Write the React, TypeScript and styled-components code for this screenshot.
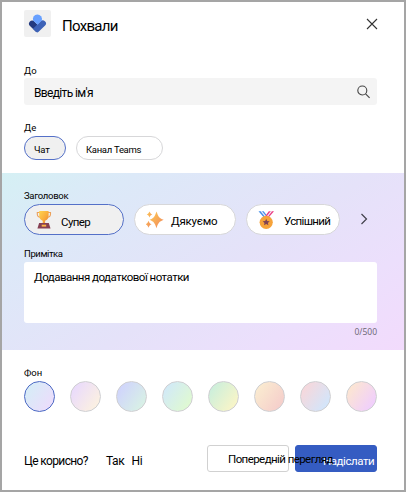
import React from "react";
import styled, { createGlobalStyle } from "styled-components";

const Global = createGlobalStyle`
  * { box-sizing: border-box; }
  body { margin: 0; background: #fff; }
`;

const Dialog = styled.main`
  width: 406px;
  height: 492px;
  border: 2px solid #a5a5a5;
  background: #fff;
  display: flex;
  flex-direction: column;
  overflow: hidden;
  color: #000;
  font-family: Roboto, "Noto Sans", sans-serif;
`;

const Text = styled.span<{ $size: number; $gap?: number; $drop?: number }>`
  display: block;
  white-space: nowrap;
  font-size: ${(p) => p.$size}px;
  line-height: 16px;
  letter-spacing: ${(p) => p.$gap ?? 0}px;
  padding-top: ${(p) => p.$drop ?? 0}px;
`;

const Header = styled.header`
  display: flex;
  align-items: center;
  height: 43px;
  padding: 8px 25px 8px 22px;
`;

const Logo = styled.div`
  width: 27px;
  height: 27px;
  border-radius: 2px;
  background: #f0f0f0;
  margin-right: 11px;
`;

const IconButton = styled.button`
  border: 0;
  padding: 0;
  background: none;
  display: flex;
  margin-left: auto;
`;

const Field = styled.section<{ $height: number; $top: number }>`
  height: ${(p) => p.$height}px;
  padding: ${(p) => p.$top}px 27px 0 22px;
`;

const Label = styled(Text)`
  height: 16px;
`;

const SearchBox = styled.div`
  height: 27px;
  display: flex;
  align-items: center;
  justify-content: space-between;
  border-radius: 3px;
  padding: 2px 6px 0 10px;
  background: #f4f4f4;
  svg { margin-top: -2px; }
`;

const Chips = styled.div`
  display: flex;
  align-items: center;
  gap: 10px;
`;

const Chip = styled.button<{ $width: number; $selected?: boolean; $large?: boolean; $iconGap?: number }>`
  flex: none;
  width: ${(p) => p.$width}px;
  height: ${(p) => (p.$large ? 31 : 24)}px;
  display: flex;
  align-items: center;
  padding: ${(p) => (p.$large ? "0 0 0 11px" : "3px 0 0 9px")};
  border: 1px solid ${(p) => (p.$selected ? "#5470c8" : "#d7d7d9")};
  border-radius: 16px;
  background: ${(p) => (p.$selected ? "#f0f0f0" : "#fff")};
  color: inherit;
  font-family: inherit;
  svg { flex: none; margin-right: ${(p) => p.$iconGap ?? 0}px; }
`;

const Next = styled.button`
  border: 0;
  padding: 0;
  background: none;
  margin: -2px 0 0 9px;
  display: flex;
`;

const Band = styled.section`
  height: 177px;
  padding: 15px 27px 0 22px;
  background: linear-gradient(147deg, #d5f0f4 0%, #dce9f8 20%, #e5e2f9 55%, #ecdffc 78%, #f2dbfc 100%);
`;

const NoteLabel = styled(Label)`
  margin-top: 10px;
  height: 17px;
`;

const Note = styled.div`
  height: 61px;
  border-radius: 3px;
  background: #fff;
  padding: 7px 10px;
`;

const Counter = styled(Text)`
  color: #696674;
  text-align: right;
  font-family: "Open Sans", "Noto Sans", sans-serif;
`;

const Swatches = styled.div`
  display: flex;
  justify-content: space-between;
  margin: -0.5px -0.5px 0 -0.5px;
`;

const Swatch = styled.div<{ $from: string; $to: string; $selected?: boolean }>`
  width: 31px;
  height: 31px;
  border-radius: 50%;
  border: 1px solid ${(p) => (p.$selected ? "#4c69c4" : "#cfcfd2")};
  background: linear-gradient(125deg, ${(p) => p.$from} 15%, ${(p) => p.$to} 85%);
`;

const Footer = styled.footer`
  display: flex;
  padding: 32px 27px 0 22px;
`;

const Feedback = styled.div`
  display: flex;
  width: 183px;
  padding-top: 8px;
`;

const Answers = styled.div`
  display: flex;
  gap: 7px;
  margin-left: 18px;
`;

const Action = styled.button<{ $primary?: boolean }>`
  flex: none;
  width: 82px;
  height: 27px;
  display: flex;
  align-items: center;
  border-radius: 3px;
  border: 1px solid ${(p) => (p.$primary ? "#355cc2" : "#d1d1d1")};
  background: ${(p) => (p.$primary ? "#355cc2" : "#fff")};
  color: ${(p) => (p.$primary ? "#fff" : "#000")};
  padding: ${(p) => (p.$primary ? "4px 0 0 27px" : "1px 0 0 20px")};
  margin-left: ${(p) => (p.$primary ? 6 : 0)}px;
  font-family: inherit;
`;

/* The preview caption runs over the neighbouring button. */
const OverlayText = styled(Text)`
  position: relative;
  z-index: 1;
`;

const swatches = [
  ["#d7ecf7", "#ebddfb"],
  ["#eadbfb", "#fbf0e2"],
  ["#d0d5fb", "#d8f0e6"],
  ["#d2eaf6", "#dff9d2"],
  ["#cdefdb", "#f8f5c8"],
  ["#faead0", "#f5cfcb"],
  ["#f6d8dc", "#d3e5fa"],
  ["#fce5d3", "#f0cffc"],
];

const Trophy = () => (
  <svg width="18" height="20" viewBox="0 0 18 20">
    <defs>
      <linearGradient id="cup" x1="0" y1="0" x2="1" y2="1">
        <stop offset="0" stopColor="#ffd34f" />
        <stop offset=".55" stopColor="#f9ac3c" />
        <stop offset="1" stopColor="#e77c35" />
      </linearGradient>
    </defs>
    <path d="M4 2.500H1.300v1.400c0 1.900 1.300 3.200 3.200 3.300M12 2.500h2.500v1.400c0 1.900-1.300 3.200-3.200 3.300" fill="none" stroke="#eca05a" strokeWidth="1.100" />
    <path d="M3.200 1h9.400v4.600c0 2.900-1.400 4.700-3.500 5.200v3.500H6.700v-3.500C4.600 10.300 3.200 8.500 3.200 5.600z" fill="url(#cup)" />
    <path d="M3.100 13h9.700l1.700 5.600H1.400z" fill="#874052" />
    <path d="M5.700 14.700h4.500v1.900H5.700z" fill="#ffb549" />
  </svg>
);

const Sparkles = () => (
  <svg width="20" height="20" viewBox="0 0 20 20">
    <defs>
      <linearGradient id="spark" x1="0" y1="0" x2="1" y2="1">
        <stop offset="0" stopColor="#ffcf52" />
        <stop offset="1" stopColor="#ef835e" />
      </linearGradient>
    </defs>
    <g fill="url(#spark)">
      <path d="M10.500 1.400c1.900 5.500 2.400 6.400 7.200 8.400-4.800 2-5.300 2.900-7.200 8.500-1.900-5.600-2.400-6.500-7-8.500 4.600-2 5.100-2.900 7-8.400z" />
      <path d="M3.500 1.600c.8 1.800 1.100 2.200 2.800 2.900-1.700.7-2 1.100-2.800 2.900C2.700 5.600 2.400 5.200.7 4.500c1.700-.7 2-1.100 2.800-2.900zM2.500 10.700c.8 2.200 1.200 2.700 3.100 3.500-1.900.8-2.300 1.300-3.100 3.500-.8-2.200-1.200-2.700-3.100-3.500 1.900-.8 2.300-1.300 3.100-3.500z" />
    </g>
  </svg>
);

const Medal = () => (
  <svg width="18" height="20" viewBox="0 0 18 20">
    <path d="M.500 1.200h5.200l4.500 6-2.800 2z" fill="#438ee8" />
    <path d="M16 1.200h-5.200l-4.500 6 2.800 2z" fill="#ec3c80" />
    <path d="m3.200 1.200 4.800 5.900M13.500 1.200 8.900 7" stroke="#eeeafa" strokeWidth="1.200" />
    <circle cx="8.200" cy="12.300" r="6.600" fill="#f6a33a" />
    <path d="m8.200 8.800 1 2.200 2.500.3-1.800 1.600.5 2.400-2.200-1.200-2.200 1.200.5-2.400-1.800-1.600 2.500-.3z" fill="#804454" />
  </svg>
);

export default function App() {
  return (
    <>
      <Global />
      <Dialog>
        <Header>
          <Logo>
            <svg width="27" height="27" viewBox="0 0 27 27">
              <path d="M5.900 11.500a3 3 0 0 1 4.500 0l5 5-1.500 5.200q-1 .8-2 0L6 16a3.200 3.200 0 0 1-.1-4.500z" fill="#233a80" />
              <path d="M12 21.800a1.800 1.800 0 0 0 2.600 0l6.500-6.200a3 3 0 0 0-.2-4.300 3 3 0 0 0-4.300 0L8.900 18.800z" fill="#3d62b7" />
              <path d="M9.100 10.600a4.600 4.600 0 1 1 8.800-.4l-4.300 4.500z" fill="#67a0ff" />
            </svg>
          </Logo>
          <Text $size={15} $gap={-0.7} $drop={5}>Похвали</Text>
          <IconButton aria-label="Закрити">
            <svg width="14" height="14" viewBox="0 0 14 14">
              <path d="m2 2 10 10M12 2 2 12" stroke="#333" strokeWidth="1.100" />
            </svg>
          </IconButton>
        </Header>

        <Field $height={71} $top={17}>
          <Label $size={9.500} $drop={1}>До</Label>
          <SearchBox>
            <Text $size={12} $gap={-0.65} $drop={1}>Введіть ім'я</Text>
            <svg width="14" height="14" viewBox="0 0 14 14" fill="none" stroke="#444" strokeWidth="1.100">
              <circle cx="5.300" cy="5.500" r="4.500" />
              <path d="m8.600 8.800 4 4" />
            </svg>
          </SearchBox>
        </Field>

        <Field $height={57} $top={4}>
          <Label $size={9.500}>Де</Label>
          <Chips>
            <Chip $width={42} $selected><Text $size={9.500} $gap={-0.2}>Чат</Text></Chip>
            <Chip $width={87}><Text $size={9.500} $gap={-0.3}>Канал Teams</Text></Chip>
          </Chips>
        </Field>

        <Band>
          <Label $size={9.500} $gap={-0.3}>Заголовок</Label>
          <Chips>
            <Chip $width={100} $large $selected $iconGap={7}><Trophy /><Text $size={11.500} $gap={-0.6} $drop={5}>Супер</Text></Chip>
            <Chip $width={102} $large $iconGap={5}><Sparkles /><Text $size={11.500} $gap={-0.2} $drop={2}>Дякуємо</Text></Chip>
            <Chip $width={94} $large $iconGap={8}><Medal /><Text $size={11.500} $gap={-0.65} $drop={2}>Успішний</Text></Chip>
            <Next aria-label="Далі">
              <svg width="10" height="12" viewBox="0 0 10 12">
                <path d="m2.500 1 5 5-5 5" fill="none" stroke="#41404a" strokeWidth="1.200" />
              </svg>
            </Next>
          </Chips>
          <NoteLabel $size={9.500} $gap={-0.4} $drop={1}>Примітка</NoteLabel>
          <Note><Text $size={11.500} $gap={-0.52}>Додавання додаткової нотатки</Text></Note>
          <Counter $size={8.500} $drop={1}>0/500</Counter>
        </Band>

        <Field $height={63} $top={15}>
          <Label $size={9.500}>Фон</Label>
          <Swatches>
            {swatches.map(([from, to], i) => (
              <Swatch key={from} $from={from} $to={to} $selected={i === 0} />
            ))}
          </Swatches>
        </Field>

        <Footer>
          <Feedback>
            <Text $size={12} $gap={-0.62}>Це корисно?</Text>
            <Answers>
              <Text $size={12} $gap={-0.3}>Так</Text>
              <Text $size={12} $gap={-0.3}>Ні</Text>
            </Answers>
          </Feedback>
          <Action><OverlayText $size={11.500} $gap={-0.57}>Попередній перегляд</OverlayText></Action>
          <Action $primary><Text $size={11.500} $gap={-0.45}>Надіслати</Text></Action>
        </Footer>
      </Dialog>
    </>
  );
}
